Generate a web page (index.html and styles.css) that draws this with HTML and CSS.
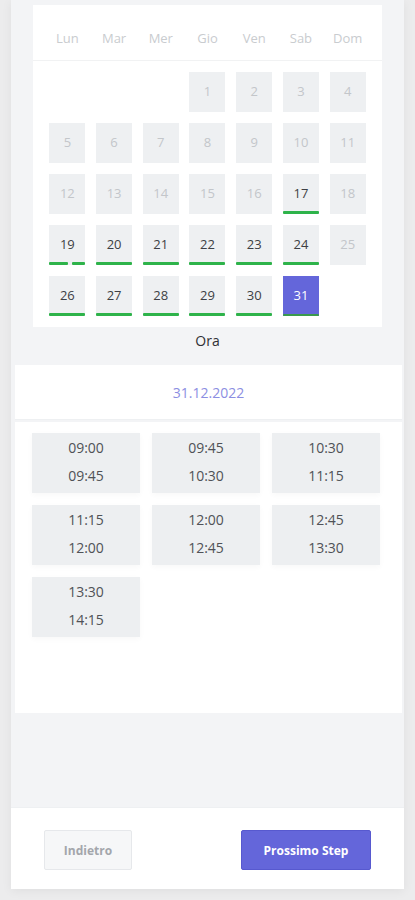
FILE: index.html
```html
<!DOCTYPE html>
<html lang="it">
<head>
<meta charset="utf-8">
<link rel="stylesheet" href="styles.css">
</head>
<body>
<div class="card">
  <div class="calendar">
    <div class="weekdays">
      <span>Lun</span><span>Mar</span><span>Mer</span><span>Gio</span><span>Ven</span><span>Sab</span><span>Dom</span>
    </div>
    <div class="days">
      <span class="empty"></span><span class="empty"></span><span class="empty"></span>
      <span class="day off">1</span><span class="day off">2</span><span class="day off">3</span><span class="day off">4</span>
      <span class="day off">5</span><span class="day off">6</span><span class="day off">7</span><span class="day off">8</span><span class="day off">9</span><span class="day off">10</span><span class="day off">11</span>
      <span class="day off">12</span><span class="day off">13</span><span class="day off">14</span><span class="day off">15</span><span class="day off">16</span><span class="day on">17<i class="bar"></i></span><span class="day off">18</span>
      <span class="day on">19<i class="bar split"><b class="seg a"></b><b class="seg b"></b></i></span><span class="day on">20<i class="bar"></i></span><span class="day on">21<i class="bar"></i></span><span class="day on">22<i class="bar"></i></span><span class="day on">23<i class="bar"></i></span><span class="day on">24<i class="bar"></i></span><span class="day off">25</span>
      <span class="day on">26<i class="bar"></i></span><span class="day on">27<i class="bar"></i></span><span class="day on">28<i class="bar"></i></span><span class="day on">29<i class="bar"></i></span><span class="day on">30<i class="bar"></i></span><span class="day sel">31<i class="bar"></i></span>
    </div>
  </div>
  <div class="ora">Ora</div>
  <div class="date-head">31.12.2022</div>
  <div class="slots">
    <div class="slot"><span>09:00</span><span>09:45</span></div>
    <div class="slot"><span>09:45</span><span>10:30</span></div>
    <div class="slot"><span>10:30</span><span>11:15</span></div>
    <div class="slot"><span>11:15</span><span>12:00</span></div>
    <div class="slot"><span>12:00</span><span>12:45</span></div>
    <div class="slot"><span>12:45</span><span>13:30</span></div>
    <div class="slot"><span>13:30</span><span>14:15</span></div>
  </div>
  <div class="spacer"></div>
  <div class="footer">
    <button class="btn back">Indietro</button>
    <button class="btn next">Prossimo Step</button>
  </div>
</div>
</body>
</html>
```

FILE: styles.css
```css
* { box-sizing: border-box; }
html, body { margin: 0; padding: 0; }
body {
  background: #ececed;
  font-family: "Open Sans", "Noto Sans", sans-serif;
  width: 415px;
  height: 900px;
  overflow: hidden;
}
.card {
  margin: 0 11px;
  padding-top: 5px;
  background: #f3f4f6;
  box-shadow: 0 2px 10px rgba(0,0,0,0.06);
}
.calendar {
  margin: 0 22px;
  background: #fff;
  padding-bottom: 11px;
}
.weekdays {
  height: 56px;
  display: grid;
  grid-template-columns: repeat(7, 1fr);
  align-items: end;
  padding: 0 11px 12px;
  border-bottom: 1px solid #f1f2f3;
  color: #c9cccf;
  font-size: 13px;
  line-height: 20px;
  text-align: center;
}
.days {
  display: grid;
  grid-template-columns: repeat(7, 1fr);
  row-gap: 11px;
  padding: 11px 11px 0;
  justify-items: center;
}
.empty { width: 36px; height: 40px; }
.day {
  position: relative;
  width: 36px;
  height: 40px;
  background: #eef0f2;
  display: flex;
  align-items: center;
  justify-content: center;
  font-size: 13px;
  padding-bottom: 2px;
}
.day.off { color: #c3c6ca; }
.day.on { color: #3d3f44; }
.day.sel { background: #6466da; color: #fff; }
.bar {
  position: absolute;
  left: 0;
  right: 0;
  bottom: 0;
  height: 3px;
  background: #2eb34a;
  border-radius: 1px;
}
.day.sel .bar { background: #3a9a4c; height: 2px; }
.bar.split { background: none; display: flex; gap: 4px; }
.seg { display: block; height: 3px; background: #2eb34a; border-radius: 1px; }
.seg.a { width: 19px; }
.seg.b { width: 13px; }
.ora {
  height: 38px;
  padding-top: 3px;
  text-align: center;
  font-size: 14px;
  line-height: 22px;
  color: #2f3034;
}
.date-head {
  margin: 0 2px 0 4px;
  height: 55px;
  background: #fff;
  border-bottom: 1px solid #eef0f2;
  text-align: center;
  padding-top: 17px;
  font-size: 14px;
  line-height: 22px;
  color: #8c8ee2;
}
.slots {
  margin: 2px 2px 0 4px;
  height: 291px;
  background: #fff;
  padding: 11px 22px 0 17px;
  display: grid;
  grid-template-columns: repeat(3, 108px);
  grid-auto-rows: 60px;
  column-gap: 12px;
  row-gap: 12px;
  align-content: start;
}
.slot {
  background: #edeff1;
  display: flex;
  flex-direction: column;
  align-items: center;
  padding-top: 1px;
  font-size: 14px;
  line-height: 28px;
  color: #505257;
  box-shadow: 0 2px 6px rgba(0,0,0,0.03);
}
.spacer { height: 94px; }
.footer {
  height: 82px;
  background: #fff;
  display: flex;
  justify-content: space-between;
  align-items: flex-start;
  padding: 22px 33px 0;
  border-top: 1px solid #eef0f2;
}
.btn {
  font-family: "Open Sans", "Noto Sans", sans-serif;
  font-weight: 700;
  font-size: 12px;
  height: 40px;
  border-radius: 2px;
  cursor: pointer;
}
.back {
  width: 88px;
  background: #f6f7f8;
  border: 1px solid #e6e8eb;
  color: #a3a6ab;
}
.next {
  width: 130px;
  background: #6466da;
  border: 1px solid #5759cf;
  color: #fff;
}
```
